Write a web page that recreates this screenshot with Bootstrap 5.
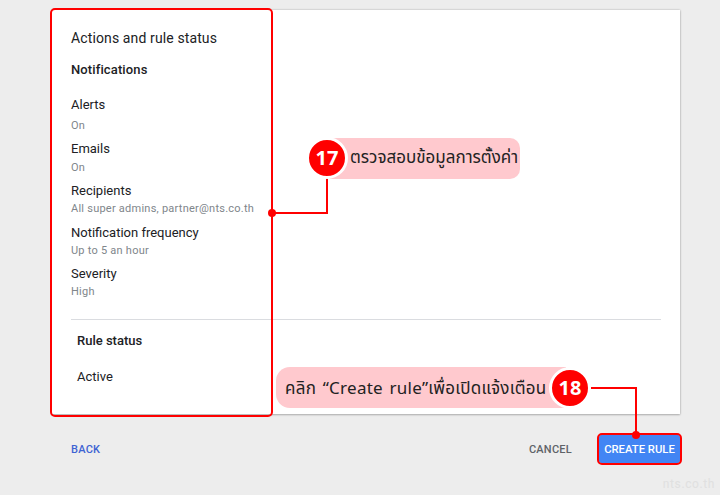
<!DOCTYPE html>
<html lang="th">
<head>
<meta charset="utf-8">
<title>Create rule</title>
<link href="https://cdn.jsdelivr.net/npm/bootstrap@5.3.0/dist/css/bootstrap.min.css" rel="stylesheet">
<style>
html,body{height:495px;overflow:hidden}
body{background:#ededed;font-family:Roboto,"Liberation Sans",sans-serif;color:#202124;position:relative;padding:10px 40px 0 52px}
.sheet{background:#fff;height:404px;box-shadow:0 0 2px rgba(0,0,0,.25),0 1px 2px rgba(0,0,0,.2);padding:18px 19px 0 19px}
.sheet-title{font-size:14px;letter-spacing:.12px;line-height:20px;margin:0 0 12px}
.sheet-sub{font-size:13px;font-weight:500;line-height:20px;letter-spacing:.12px;margin:0 0 16px}
.item-name{font-size:13px;line-height:18px}
.item-val{font-size:11px;line-height:14px;color:#80868b;letter-spacing:.24px;margin-top:2px}
.first-val{margin-top:5px}
.second-val{margin-top:3px}
.item-gap{margin-bottom:7px}
.rule-line{border-top:1px solid #dadce0;margin:20px 0 12px}
.status-block{padding-left:6px;font-size:13px;line-height:18px}
.status-head{margin-bottom:18px}
.foot-bar{height:70px;padding:0 0 0 19px}
.txt-btn{font-size:11px;font-weight:500;letter-spacing:.25px;background:none;border:0;padding:2px 0 0}
.back-link{color:#3f63d3}
.cancel-link{color:#5f6368}
.go-btn{background:#4285f4;color:#fff;font-size:11.3px;font-weight:500;border:0;border-radius:2px;width:81px;height:28px;padding:2px 0 0;margin-left:27px}
.red-frame{position:absolute;border:2px solid #f00;border-radius:5px;pointer-events:none}
.frame-a{left:50px;top:8px;width:223px;height:409px}
.frame-b{left:597px;top:433px;width:85px;height:32px}
.hline,.vline{position:absolute;background:#f00}
.dot{position:absolute;width:8px;height:8px;border-radius:50%;background:#f00}
.pill{position:absolute;background:#ffc9ce;font-family:"Noto Sans Thai","Loma","Garuda","DejaVu Sans",sans-serif;color:#222;font-size:17px;white-space:nowrap;display:flex;align-items:center}
.pill-a{left:330px;top:138px;width:190px;height:41px;border-radius:0 10px 10px 0;padding:1px 0 0 20px}
.pill-b{left:276px;top:367px;width:290px;height:41px;border-radius:14px 0 0 14px;padding:4px 0 0 9px;letter-spacing:.25px;word-spacing:2px}
.num{position:absolute;border-radius:50%;background:#f00;border:3px solid #fff;color:#fff;font-family:"Noto Sans",sans-serif;font-weight:700;font-size:20px;display:flex;align-items:center;justify-content:center;box-sizing:content-box;width:36px;height:36px}
.num-a{left:306px;top:137px}
.num-b{left:549px;top:367px}
.mark-site{position:absolute;right:5px;bottom:2px;font-size:12px;letter-spacing:.6px;color:#e0e0e0}
</style>
</head>
<body>
<div class="sheet">
  <h2 class="sheet-title fw-normal">Actions and rule status</h2>
  <h3 class="sheet-sub">Notifications</h3>
  <div class="d-flex flex-column">
    <div class="item-gap"><div class="item-name">Alerts</div><div class="item-val first-val">On</div></div>
    <div class="item-gap"><div class="item-name">Emails</div><div class="item-val second-val">On</div></div>
    <div class="mb-2"><div class="item-name">Recipients</div><div class="item-val">All super admins, partner@nts.co.th</div></div>
    <div class="item-gap"><div class="item-name">Notification frequency</div><div class="item-val">Up to 5 an hour</div></div>
    <div><div class="item-name">Severity</div><div class="item-val">High</div></div>
  </div>
  <div class="rule-line"></div>
  <div class="status-block">
    <div class="fw-medium status-head">Rule status</div>
    <div>Active</div>
  </div>
</div>
<div class="foot-bar d-flex align-items-center justify-content-between">
  <button class="txt-btn back-link" type="button">BACK</button>
  <div class="d-flex align-items-center">
    <button class="txt-btn cancel-link" type="button">CANCEL</button>
    <button class="go-btn" type="button">CREATE RULE</button>
  </div>
</div>

<div class="red-frame frame-a"></div>
<div class="red-frame frame-b"></div>
<div class="hline" style="left:272px;top:212px;width:56px;height:2px"></div>
<div class="vline" style="left:326px;top:178px;width:2px;height:36px"></div>
<div class="dot" style="left:268px;top:209px"></div>
<div class="pill pill-a">ตรวจสอบข้อมูลการตั้งค่า</div>
<div class="num num-a">17</div>
<div class="pill pill-b">คลิก “Create rule”เพื่อเปิดแจ้งเตือน</div>
<div class="num num-b">18</div>
<div class="hline" style="left:591px;top:387px;width:46px;height:2px"></div>
<div class="vline" style="left:635px;top:387px;width:2px;height:47px"></div>
<div class="dot" style="left:632px;top:431px"></div>
<div class="mark-site">nts.co.th</div>
<script src="https://cdn.jsdelivr.net/npm/bootstrap@5.3.0/dist/js/bootstrap.bundle.min.js"></script>
</body>
</html>
